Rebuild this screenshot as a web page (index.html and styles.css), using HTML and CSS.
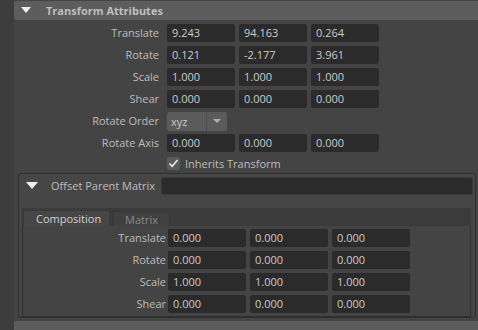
FILE: index.html
```html
<!DOCTYPE html>
<html>
<head>
<meta charset="utf-8">
<link rel="stylesheet" href="styles.css">
</head>
<body>
<div class="page">
  <div class="strip"></div>
  <div class="main">
    <div class="header">
      <span class="tri"></span>
      <span class="title">Transform Attributes</span>
    </div>
    <div class="rows">
      <div class="row"><span class="label">Translate</span><span class="field">9.243</span><span class="field">94.163</span><span class="field">0.264</span></div>
      <div class="row"><span class="label">Rotate</span><span class="field">0.121</span><span class="field">-2.177</span><span class="field">3.961</span></div>
      <div class="row"><span class="label">Scale</span><span class="field">1.000</span><span class="field">1.000</span><span class="field">1.000</span></div>
      <div class="row"><span class="label">Shear</span><span class="field">0.000</span><span class="field">0.000</span><span class="field">0.000</span></div>
      <div class="row"><span class="label">Rotate Order</span><span class="dropdown"><span class="dd-text">xyz</span><span class="dd-btn"><span class="dd-arrow"></span></span></span></div>
      <div class="row"><span class="label">Rotate Axis</span><span class="field">0.000</span><span class="field">0.000</span><span class="field">0.000</span></div>
      <div class="row check-row"><span class="label"></span><span class="checkbox"><svg width="13" height="13" viewBox="0 0 13 13"><path d="M2.5 6.5 L5.2 9.3 L10.5 3" fill="none" stroke="#e8e8e8" stroke-width="1.6"/></svg></span><span class="check-label">Inherits Transform</span></div>
    </div>
    <div class="frame">
      <div class="frame-head">
        <span class="tri tri-big"></span>
        <span class="frame-title">Offset Parent Matrix</span>
        <span class="wide-field"></span>
      </div>
      <div class="tabs">
        <div class="tabbar">
          <span class="tab active">Composition</span>
          <span class="tab">Matrix</span>
        </div>
        <div class="panel">
          <div class="prow"><span class="plabel">Translate</span><span class="pfield">0.000</span><span class="pfield">0.000</span><span class="pfield">0.000</span></div>
          <div class="prow"><span class="plabel">Rotate</span><span class="pfield">0.000</span><span class="pfield">0.000</span><span class="pfield">0.000</span></div>
          <div class="prow"><span class="plabel">Scale</span><span class="pfield">1.000</span><span class="pfield">1.000</span><span class="pfield">1.000</span></div>
          <div class="prow"><span class="plabel">Shear</span><span class="pfield">0.000</span><span class="pfield">0.000</span><span class="pfield">0.000</span></div>
        </div>
      </div>
    </div>
    <div class="next-header"></div>
  </div>
</div>
</body>
</html>
```

FILE: styles.css
```css
* { box-sizing: border-box; }
html, body {
  margin: 0;
  padding: 0;
  background: #444444;
  width: 478px;
  height: 330px;
  overflow: hidden;
  font-family: "Open Sans", "Noto Sans", sans-serif;
  font-size: 11px;
  color: #bdbdbd;
}
.page {
  display: flex;
  height: 330px;
}
.strip {
  width: 14px;
  flex: none;
  background: #3d3d3d;
}
.main {
  flex: 1;
  display: flex;
  flex-direction: column;
}
.header {
  margin-top: 1px;
  height: 20px;
  background: #5d5d5d;
  border-radius: 3px 0 0 3px;
  display: flex;
  align-items: center;
}
.tri {
  width: 0;
  height: 0;
  border-left: 5.5px solid transparent;
  border-right: 5.5px solid transparent;
  border-top: 6px solid #eeeeee;
  margin-left: 7px;
}
.title {
  margin-left: 15px;
  font-weight: bold;
  color: #bfbfbf;
  font-size: 11px;
}
.rows {
  display: flex;
  flex-direction: column;
  gap: 4px;
  padding-top: 4px;
}
.row {
  display: flex;
  align-items: center;
  height: 18px;
  gap: 4px;
}
.label {
  width: 145px;
  margin-right: 4px;
  text-align: right;
  color: #bdbdbd;
  flex: none;
}
.field {
  width: 68px;
  height: 18px;
  background: #2b2b2b;
  border-radius: 2px;
  color: #cbcbcb;
  padding-left: 5px;
  line-height: 18px;
  flex: none;
}
.dropdown {
  display: flex;
  width: 60px;
  height: 19px;
  margin-top: 1px;
  border-radius: 2px;
  overflow: hidden;
}
.dd-text {
  width: 40px;
  background: #5b5b5b;
  padding-left: 4px;
  line-height: 19px;
  color: #cccccc;
  border-right: 1px solid #4a4a4a;
}
.dd-btn {
  flex: 1;
  background: #5b5b5b;
  display: flex;
  align-items: center;
  justify-content: center;
}
.dd-arrow {
  width: 0;
  height: 0;
  border-left: 4px solid transparent;
  border-right: 4px solid transparent;
  border-top: 4px solid #b0b0b0;
}
.check-row {
  height: 14px;
  margin-top: 1px;
}
.checkbox {
  width: 13px;
  height: 13px;
  background: #5b5b5b;
  border-radius: 2px;
  flex: none;
  display: flex;
}
.check-label {
  margin-left: 1px;
  color: #bdbdbd;
}
.frame {
  margin-top: 2px;
  margin-left: 4px;
  width: 458px;
  height: 150px;
  border: 1px solid #2f2f2f;
  border-radius: 3px;
  background: #464646;
  display: flex;
  flex-direction: column;
}
.frame-head {
  height: 24px;
  display: flex;
  align-items: center;
}
.tri-big {
  border-left-width: 6.5px;
  border-right-width: 6.5px;
  border-top-width: 7px;
  margin-left: 7px;
}
.frame-title {
  margin-left: 13px;
  color: #bdbdbd;
}
.wide-field {
  margin-left: 6px;
  flex: 1;
  margin-right: 2px;
  height: 18px;
  background: #2b2b2b;
  border: 1px solid #3a3a3a;
  border-radius: 2px;
}
.tabs {
  margin-top: 10px;
  margin-left: 3px;
  margin-right: 4px;
  display: flex;
  flex-direction: column;
}
.tabbar {
  height: 18px;
  background: #3b3b3b;
  display: flex;
  align-items: flex-end;
  gap: 3px;
  padding-left: 1px;
}
.tab {
  height: 15px;
  line-height: 15px;
  padding: 0 11px;
  background: #404040;
  color: #8a8a8a;
  border-radius: 2px 2px 0 0;
  border: 1px solid #383838;
  border-bottom: none;
}
.tab.active {
  height: 16px;
  background: #464646;
  color: #d2d2d2;
  width: 87px;
  padding-left: 12px;
}
.panel {
  height: 91px;
  border: 1px solid #2f2f2f;
  border-top: none;
  background: #444444;
  padding-top: 3px;
  display: flex;
  flex-direction: column;
  gap: 4px;
}
.prow {
  display: flex;
  align-items: center;
  height: 18px;
  gap: 4px;
}
.plabel {
  width: 143px;
  text-align: right;
  flex: none;
  margin-right: -2px;
  color: #bdbdbd;
}
.pfield {
  width: 78px;
  height: 18px;
  background: #2b2b2b;
  border-radius: 2px;
  color: #cbcbcb;
  padding-left: 5px;
  line-height: 18px;
  flex: none;
}
.next-header {
  margin-top: 3px;
  height: 10px;
  background: #5d5d5d;
  border-radius: 3px 0 0 0;
}
```
